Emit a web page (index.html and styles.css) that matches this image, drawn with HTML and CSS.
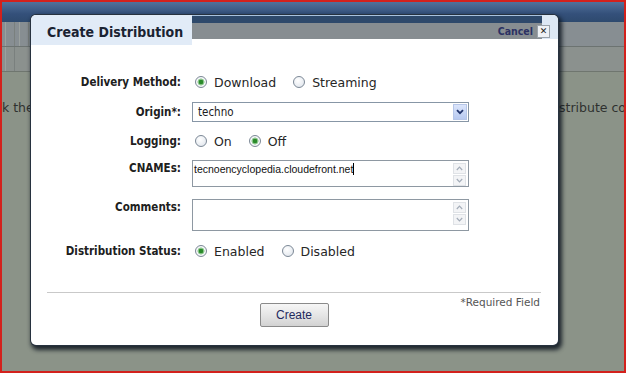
FILE: index.html
```html
<!DOCTYPE html>
<html lang="en">
<head>
    <meta charset="UTF-8">
    <title>Create Distribution</title>
    <link rel="stylesheet" href="styles.css">
</head>
<body>

    <div class="screen">
        <div class="topbar"></div>
        <div class="toolbar">
            <span class="tool-btn"></span>
            <span class="tool-btn"></span>
        </div>
        <div class="subbar">
            <span class="tool-btn"></span>
        </div>
        <div class="page">
            <p class="intro">
                <span>k the</span>
                <span>stribute co</span>
            </p>
        </div>

        <!-- modal dialog -->
        <div class="dialog">
            <div class="dialog-head">
                <h2 class="dialog-title">Create Distribution</h2>
                <div class="dialog-bar">
                    <a class="cancel" href="#">Cancel</a>
                    <span class="close">&#x2715;</span>
                </div>
                <div class="dialog-corner"></div>
            </div>

            <form class="dist-form">
                <div class="row row-method">
                    <span class="label">Delivery Method:</span>
                    <div class="field">
                        <label class="opt"><input type="radio" name="method" checked>Download</label>
                        <label class="opt"><input type="radio" name="method">Streaming</label>
                    </div>
                </div>

                <div class="row row-origin">
                    <span class="label">Origin*:</span>
                    <div class="field">
                        <div class="select">
                            <span class="select-value">techno</span>
                            <span class="select-btn">
                                <svg width="8" height="6" viewBox="0 0 8 6"><path d="M1 1.2 L4 4.2 L7 1.2" fill="none" stroke="#23366e" stroke-width="1.8"/></svg>
                            </span>
                        </div>
                    </div>
                </div>

                <div class="row row-logging">
                    <span class="label">Logging:</span>
                    <div class="field">
                        <label class="opt"><input type="radio" name="logging">On</label>
                        <label class="opt"><input type="radio" name="logging" checked>Off</label>
                    </div>
                </div>

                <div class="row row-cnames">
                    <span class="label">CNAMEs:</span>
                    <div class="field">
                        <div class="textbox textbox-cnames">
                            <div class="textbox-text">tecnoencyclopedia.cloudefront.net<span class="caret"></span></div>
                            <div class="scroll">
                                <span class="scroll-btn">
                                    <svg width="7" height="5" viewBox="0 0 7 5"><path d="M0.8 4 L3.5 1.2 L6.2 4" fill="none" stroke="#a3acb8" stroke-width="1.2"/></svg>
                                </span>
                                <span class="scroll-btn">
                                    <svg width="7" height="5" viewBox="0 0 7 5"><path d="M0.8 1 L3.5 3.8 L6.2 1" fill="none" stroke="#a3acb8" stroke-width="1.2"/></svg>
                                </span>
                            </div>
                        </div>
                    </div>
                </div>

                <div class="row row-comments">
                    <span class="label">Comments:</span>
                    <div class="field">
                        <div class="textbox textbox-comments">
                            <div class="textbox-text"></div>
                            <div class="scroll">
                                <span class="scroll-btn">
                                    <svg width="7" height="5" viewBox="0 0 7 5"><path d="M0.8 4 L3.5 1.2 L6.2 4" fill="none" stroke="#a3acb8" stroke-width="1.2"/></svg>
                                </span>
                                <span class="scroll-btn">
                                    <svg width="7" height="5" viewBox="0 0 7 5"><path d="M0.8 1 L3.5 3.8 L6.2 1" fill="none" stroke="#a3acb8" stroke-width="1.2"/></svg>
                                </span>
                            </div>
                        </div>
                    </div>
                </div>

                <div class="row row-status">
                    <span class="label">Distribution Status:</span>
                    <div class="field">
                        <label class="opt"><input type="radio" name="status" checked>Enabled</label>
                        <label class="opt"><input type="radio" name="status">Disabled</label>
                    </div>
                </div>

                <div class="form-foot">
                    <span class="foot-spacer"></span>
                    <button type="button" class="create-btn">Create</button>
                    <span class="required">*Required Field</span>
                </div>
            </form>
        </div>
    </div>

</body>
</html>
```

FILE: styles.css
```css
/* Page behind the dialog (dimmed) */
body {
    margin: 0;
    padding: 0;
    font-family: "DejaVu Sans", Verdana, sans-serif;
    background: #8b9388;
}
.screen {
    position: relative;
    width: 626px;
    height: 373px;
    box-sizing: border-box;
    border: 2px solid #d3211c;
    background: #8b9388;
    overflow: hidden;
}
.topbar {
    height: 20px;
    background: linear-gradient(#52719a, #34507a 60%, #2e4a6e);
}
.toolbar {
    height: 24px;
    background: #878e92;
    border-bottom: 1px solid #6c7371;
    display: flex;
    gap: 4px;
    padding-left: 3px;
}
.subbar {
    height: 24px;
    background: #8b918e;
    border-bottom: 1px solid #6f766f;
    display: flex;
    padding-left: 3px;
}
.tool-btn {
    width: 8px;
    border-left: 1px solid #9ba19f;
    border-right: 1px solid #7a807e;
}
.page {
    padding-top: 28px;
}
.intro {
    margin: 0;
    display: flex;
    justify-content: space-between;
    font-size: 12.5px;
    color: #2f312f;
    white-space: nowrap;
}
.intro span:last-child {
    margin-right: -2px;
}

/* Dialog */
.dialog {
    position: absolute;
    left: 29px;
    top: 13px;
    width: 527px;
    background: #fff;
    border-radius: 5px;
    box-shadow: 0 0 0 1px #27323f, 2px 3px 4px 2px rgba(12, 20, 30, 0.85);
}
.dialog-head {
    display: flex;
    height: 30px;
}
.dialog-title {
    margin: 0;
    width: 161px;
    box-sizing: border-box;
    padding-left: 16px;
    background: #e1ebf7;
    border-top-left-radius: 5px;
    font-family: "DejaVu Sans Condensed", "DejaVu Sans", sans-serif;
    font-stretch: condensed;
    font-weight: bold;
    font-size: 14px;
    line-height: 34px;
    color: #1a2332;
    white-space: nowrap;
}
.dialog-bar {
    flex: 1;
    height: 24px;
    box-sizing: border-box;
    padding-top: 8px;
    background: linear-gradient(#a9c2de 0 1px, #2e496b 1px 8px, #878d91 8px);
    display: flex;
    justify-content: flex-end;
    align-items: center;
}
.cancel {
    font-family: "DejaVu Sans Condensed", "DejaVu Sans", sans-serif;
    font-stretch: condensed;
    font-weight: bold;
    font-size: 10.5px;
    color: #2b3163;
    text-decoration: none;
    margin-right: 4px;
}
.close {
    width: 11px;
    height: 11px;
    margin-right: -8px;
    position: relative;
    z-index: 1;
    background: #eef1f4;
    border: 1px solid #9aa3ab;
    font-size: 9px;
    line-height: 11px;
    text-align: center;
    font-weight: bold;
    color: #222;
}
.dialog-corner {
    width: 16px;
    height: 24px;
    background: #dde8f4;
    border-top-right-radius: 5px;
}

/* Form rows */
.dist-form {
    padding: 27px 0 18px;
}
.row {
    display: flex;
    align-items: center;
    gap: 11px;
}
.label {
    width: 150px;
    flex-shrink: 0;
    text-align: right;
    font-family: "DejaVu Sans Condensed", "DejaVu Sans", sans-serif;
    font-stretch: condensed;
    font-weight: bold;
    font-size: 11.5px;
    line-height: 20px;
    color: #202020;
}
.field {
    width: 277px;
    display: flex;
    align-items: center;
    height: 20px;
}
.row-method { margin-bottom: 10px; }
.row-origin { margin-bottom: 9px; }
.row-logging { margin-bottom: 9px; }
.row-cnames { margin-bottom: 12px; align-items: flex-start; }
.row-comments { margin-bottom: 10px; align-items: flex-start; }
.row-cnames .label,
.row-comments .label {
    line-height: 16px;
}
.row-cnames .field { height: 27px; }
.row-comments .field { height: 32px; }

.opt {
    display: flex;
    align-items: center;
    font-size: 12.5px;
    color: #262626;
    margin-right: 14px;
}
.opt input {
    appearance: none;
    -webkit-appearance: none;
    width: 12px;
    height: 12px;
    margin: 0 7px 0 3px;
    border: 1px solid #7c8896;
    border-radius: 50%;
    background: radial-gradient(circle at 40% 35%, #ffffff, #dce2ea);
}
.opt input:checked {
    background: radial-gradient(circle, #2a8a2a 0 2px, #8ec88e 2.6px 3.2px, #f4f6f8 3.8px);
}

/* Select */
.select {
    position: relative;
    width: 100%;
    height: 20px;
    box-sizing: border-box;
    border: 1px solid #8796a6;
    background: #fff;
    display: flex;
    align-items: center;
}
.select-value {
    padding-left: 5px;
    font-family: "DejaVu Sans Condensed", "DejaVu Sans", sans-serif;
    font-stretch: condensed;
    font-size: 11.5px;
    color: #1c1c1c;
}
.select-btn {
    position: absolute;
    right: 1px;
    top: 1px;
    width: 14px;
    height: 16px;
    box-sizing: border-box;
    border: 1px solid #b6c6e8;
    background: linear-gradient(#dbe5fb, #b7c9f0);
    display: flex;
    align-items: center;
    justify-content: center;
}

/* Textareas */
.textbox {
    width: 100%;
    height: 100%;
    box-sizing: border-box;
    border: 1px solid #8e98a2;
    background: #fff;
    display: flex;
}
.textbox-text {
    flex: 1;
    padding: 2px 1px;
    font-family: "Liberation Sans", Arial, sans-serif;
    font-size: 10.5px;
    line-height: 13px;
    color: #111;
}
.caret {
    display: inline-block;
    width: 1px;
    height: 12px;
    background: #000;
    vertical-align: -2px;
}
.scroll {
    width: 13px;
    margin: 2px 2px 0 0;
    display: flex;
    flex-direction: column;
    gap: 1px;
}
.scroll-btn {
    height: 11px;
    box-sizing: border-box;
    border: 1px solid #dfe2e6;
    background: #f3f4f6;
    display: flex;
    align-items: center;
    justify-content: center;
}

/* Footer */
.form-foot {
    margin: 31px 17px 0 16px;
    border-top: 1px solid #c9c9c9;
    display: grid;
    grid-template-columns: 1fr auto 1fr;
}
.create-btn {
    margin-top: 10px;
    width: 69px;
    height: 24px;
    border: 1px solid #8a8a8a;
    border-radius: 2px;
    background: linear-gradient(#f6f6f6, #e2e2e2 60%, #d2d2d2);
    font-family: "Liberation Sans", Arial, sans-serif;
    font-size: 12px;
    color: #1f2a5e;
    cursor: pointer;
}
.required {
    justify-self: end;
    margin-top: 2px;
    margin-right: 1px;
    font-size: 10.5px;
    line-height: 14px;
    color: #555;
}
```
